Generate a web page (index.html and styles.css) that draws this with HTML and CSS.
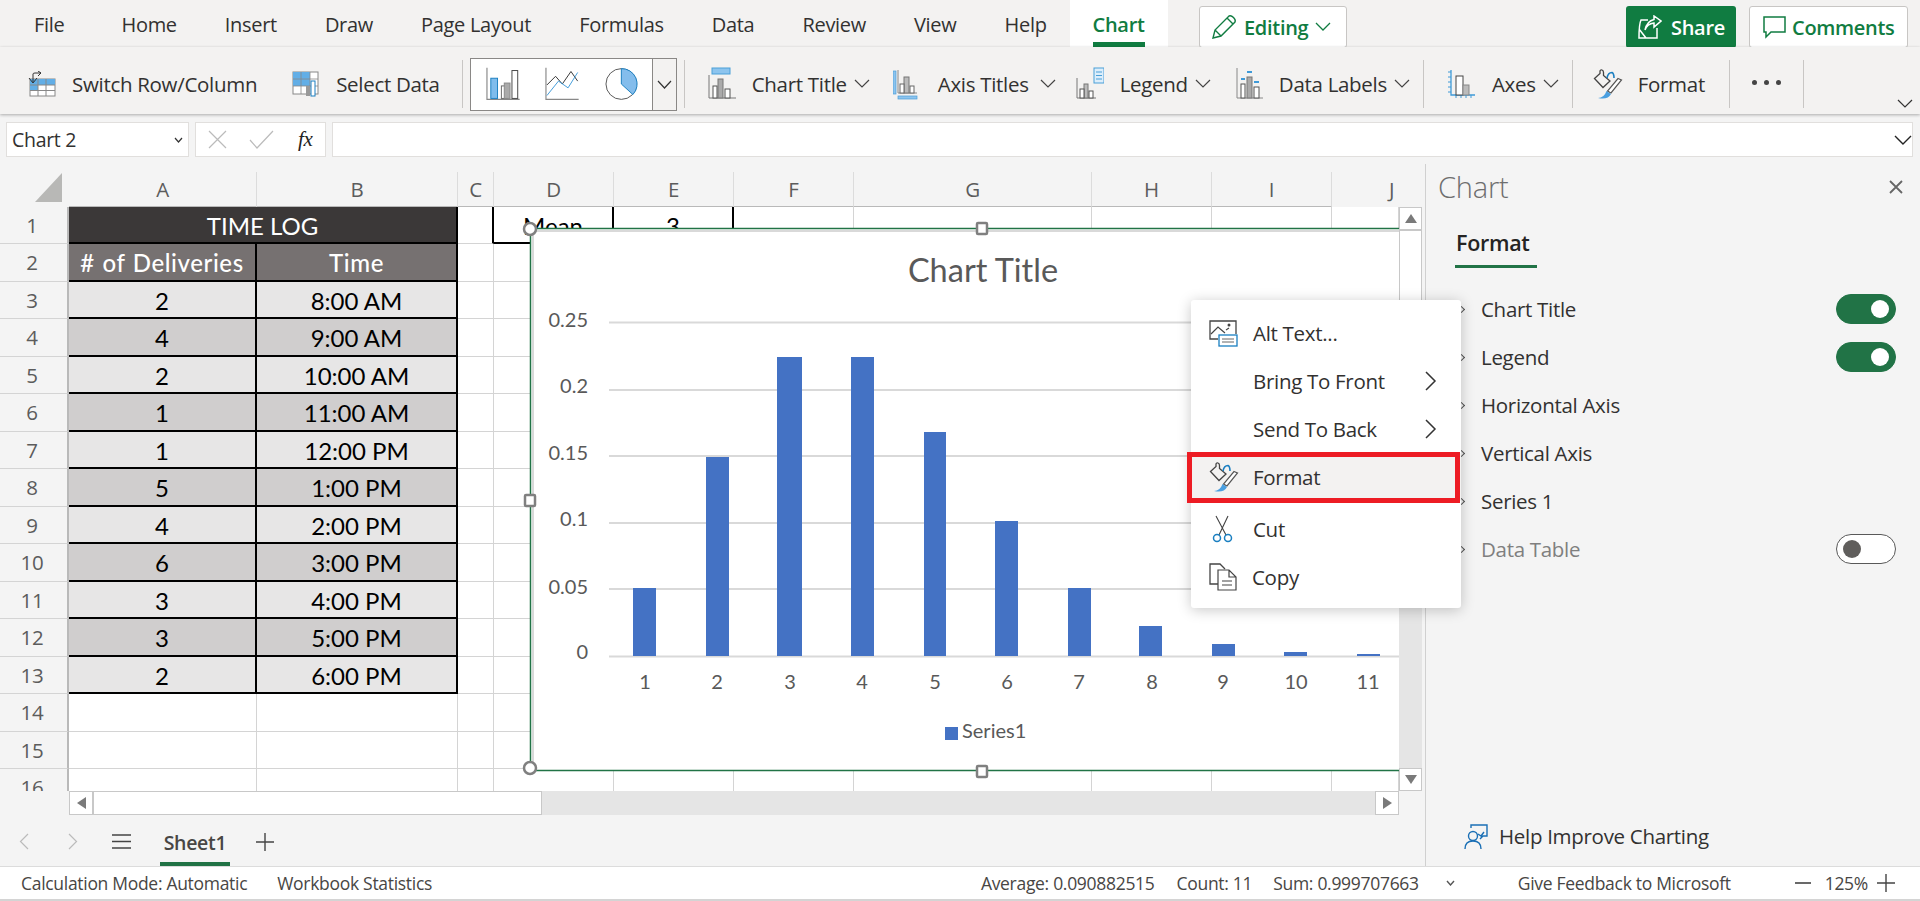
FILE: index.html
```html
<!DOCTYPE html>
<html lang="en">
<head>
    <meta charset="UTF-8">
    <title>Excel - Chart</title>
    <link rel="stylesheet" href="styles.css">
</head>
<body>
    <svg class="defs" width="0" height="0">
        <symbol id="format-icon" viewBox="0 0 30 30">
            <path d="M1.5 9.5 L7 4.5 V2 Q7.5 .5 9 1 Q10.5 1.5 10.5 3.5 V6.5 L17 12 L10 18.5 Z" fill="none" stroke="#444" stroke-width="1.3"/>
            <path d="M14 9 Q15 3.5 19 3.5 Q21 4.5 21 9" fill="none" stroke="#1a7fc1" stroke-width="1.6"/>
            <path d="M25 9.5 L28.5 11 L18 24 L14.5 22 Z" fill="#fff" stroke="#555" stroke-width="1.2"/>
            <path d="M5 29 Q11 29 13.5 22 L18 25 Q15 31 5 29 Z" fill="#4a9fe0"/>
        </symbol>
    </svg>

    <div class="tabs">
        <div class="tab-list">
            <span class="tab tab-file">File</span>
            <span class="tab">Home</span>
            <span class="tab">Insert</span>
            <span class="tab">Draw</span>
            <span class="tab">Page Layout</span>
            <span class="tab">Formulas</span>
            <span class="tab">Data</span>
            <span class="tab">Review</span>
            <span class="tab">View</span>
            <span class="tab">Help</span>
            <span class="tab tab-active"><b>Chart</b></span>
        </div>
        <button class="editing">
            <svg width="26" height="26" viewBox="0 0 26 26"><path d="M2 24 L4 16 L18 2 Q20 1 22.5 3.5 Q25 6 24 8 L10 22 Z M4 16 L10 22 M16 4 L22 10" fill="none" stroke="#107c41" stroke-width="1.4"/></svg>
            <span>Editing</span>
            <svg width="16" height="10" viewBox="0 0 16 10"><path d="M1 1 L8 8 L15 1" fill="none" stroke="#107c41" stroke-width="1.3"/></svg>
        </button>
        <button class="share">
            <svg width="24" height="24" viewBox="0 0 24 24"><path d="M10 5 H3 Q1 9 1 23 H19 V13 M1 14 L8 23" fill="none" stroke="#fff" stroke-width="1.5"/><path d="M7 15 Q9 9 16 8 V12 L23 6 L16 1 V4.5 Q9 6 7 15 Z" fill="none" stroke="#fff" stroke-width="1.5"/></svg>
            <span>Share</span>
        </button>
        <button class="comments">
            <svg width="23" height="23" viewBox="0 0 23 23"><path d="M1 1 H22 V16 H8 L3 21 V16 H1 Z" fill="none" stroke="#107c41" stroke-width="1.5"/></svg>
            <span>Comments</span>
        </button>
    </div>

    <div class="ribbon">
        <div class="rb rb-switch">
            <svg width="28" height="26" viewBox="0 0 28 26"><rect x="2" y="8" width="25" height="17" fill="#fff" stroke="#888"/><rect x="2" y="8" width="25" height="6" fill="#62aee6"/><rect x="2" y="14" width="8" height="5" fill="#62aee6"/><path d="M10 8 V25 M18 8 V25 M2 14 H27 M2 19.5 H27" stroke="#888"/><path d="M1 7 L5 12 L9 7 M5 11 V3 Q5 2 7 2 H13 M10 0 L13 2 L10 5" fill="none" stroke="#333"/></svg>
            <span>Switch Row/Column</span>
        </div>
        <div class="rb rb-select">
            <svg width="28" height="26" viewBox="0 0 28 26"><rect x="1" y="1" width="25" height="22" fill="#fff" stroke="#888"/><rect x="1" y="1" width="17" height="14" fill="#62aee6"/><path d="M9 1 V23 M18 1 V23 M1 8 H26 M1 15 H26" stroke="#888" stroke-width=".8"/><rect x="14" y="15" width="4" height="10" fill="#999"/><rect x="19" y="10" width="4" height="15" fill="#fff" stroke="#1a7fc1"/></svg>
            <span>Select Data</span>
        </div>
        <i class="sep sep-gallery"></i>
        <div class="gallery">
            <svg width="36" height="34" viewBox="0 0 36 34"><path d="M1 0 V33 H35" fill="none" stroke="#888" stroke-width="1.2"/><rect x="5" y="11" width="7" height="21" fill="#7fbcec" stroke="#1a7fc1"/><rect x="16" y="19" width="6" height="13" fill="#fff" stroke="#666"/><rect x="19" y="16" width="6" height="16" fill="#aaa" stroke="#888"/><rect x="27" y="3" width="6" height="29" fill="#fff" stroke="#444"/></svg>
            <svg width="36" height="34" viewBox="0 0 36 34"><path d="M1 0 V33 H35" fill="none" stroke="#888" stroke-width="1.2"/><path d="M2 18 L11 9 L18 17 L27 4 L34 14" fill="none" stroke="#333" stroke-width="1"/><path d="M2 29 L14 14 L24 21 L34 5" fill="none" stroke="#3f9ad8" stroke-width="1"/></svg>
            <svg width="34" height="34" viewBox="0 0 34 34"><circle cx="17" cy="17" r="16" fill="#fff" stroke="#555"/><path d="M17 1 A16 16 0 0 1 29 28 L17 17 Z" fill="#84bdec" stroke="#1a7fc1"/></svg>
            <span class="gallery-more"><svg width="15" height="9" viewBox="0 0 15 9"><path d="M1 1 L7.5 8 L14 1" fill="none" stroke="#333" stroke-width="1.2"/></svg></span>
        </div>
        <i class="sep"></i>
        <div class="rb rb-title">
            <svg width="28" height="34" viewBox="0 0 28 34"><rect x="4" y="1" width="18" height="6" fill="#8cc4ee" stroke="#4a9fd8"/><path d="M1 8 V31 H28" fill="none" stroke="#777"/><rect x="10" y="12" width="5" height="19" fill="#aaa" stroke="#777"/><rect x="17" y="22" width="5" height="9" fill="#fff" stroke="#555"/><rect x="5" y="19" width="4" height="12" fill="#fff" stroke="#555"/></svg>
            <span>Chart Title</span><svg class="chev" width="16" height="10" viewBox="0 0 16 10"><path d="M1 1 L8 8 L15 1" fill="none" stroke="#444" stroke-width="1.2"/></svg>
        </div>
        <div class="rb rb-axis">
            <svg width="25" height="34" viewBox="0 0 25 34"><rect x="0" y="4" width="3" height="23" fill="#8cc4ee" stroke="#4a9fd8" stroke-width=".7"/><path d="M5 3 V26 H24" fill="none" stroke="#888"/><rect x="11" y="10" width="5" height="16" fill="#bbb" stroke="#777"/><rect x="17" y="19" width="4" height="7" fill="#fff" stroke="#666"/><rect x="7" y="17" width="4" height="9" fill="#fff" stroke="#666"/><rect x="5" y="29" width="19" height="3" fill="#8cc4ee" stroke="#4a9fd8" stroke-width=".7"/></svg>
            <span>Axis Titles</span><svg class="chev" width="16" height="10" viewBox="0 0 16 10"><path d="M1 1 L8 8 L15 1" fill="none" stroke="#444" stroke-width="1.2"/></svg>
        </div>
        <div class="rb rb-legend">
            <svg width="28" height="34" viewBox="0 0 28 34"><path d="M1 11 V31 H20" fill="none" stroke="#777"/><rect x="8" y="17" width="4" height="14" fill="#bbb" stroke="#777"/><rect x="13" y="24" width="4" height="7" fill="#fff" stroke="#555"/><rect x="4" y="22" width="4" height="9" fill="#fff" stroke="#555"/><rect x="18" y="1" width="10" height="15" fill="#dceefb" stroke="#4a9fd8"/><path d="M20 5 H26 M20 8.5 H26 M20 12 H26" stroke="#4a9fd8"/></svg>
            <span>Legend</span><svg class="chev" width="16" height="10" viewBox="0 0 16 10"><path d="M1 1 L8 8 L15 1" fill="none" stroke="#444" stroke-width="1.2"/></svg>
        </div>
        <div class="rb rb-labels">
            <svg width="27" height="34" viewBox="0 0 27 34"><path d="M1 1 V31 H27" fill="none" stroke="#888"/><rect x="11" y="10" width="5" height="21" fill="#aaa" stroke="#777"/><rect x="18" y="20" width="5" height="11" fill="#fff" stroke="#555"/><rect x="5" y="17" width="4" height="14" fill="#fff" stroke="#555"/><path d="M11 5 H16 M5 12 H9 M18 15 H23" stroke="#3f9ad8" stroke-width="2"/></svg>
            <span>Data Labels</span><svg class="chev" width="16" height="10" viewBox="0 0 16 10"><path d="M1 1 L8 8 L15 1" fill="none" stroke="#444" stroke-width="1.2"/></svg>
        </div>
        <i class="sep"></i>
        <div class="rb rb-axes">
            <svg width="28" height="30" viewBox="0 0 28 30"><path d="M3 1 V26 H27" fill="none" stroke="#3f9ad8" stroke-width="1.3"/><path d="M0 3 H3 M0 8 H3 M0 13 H3 M0 18 H3 M0 23 H3 M8 26 V29 M13 26 V29 M18 26 V29 M23 26 V29" stroke="#3f9ad8"/><rect x="8" y="7" width="7" height="19" fill="#fff" stroke="#444"/><rect x="15" y="16" width="6" height="10" fill="#bbb" stroke="#888"/></svg>
            <span>Axes</span><svg class="chev" width="16" height="10" viewBox="0 0 16 10"><path d="M1 1 L8 8 L15 1" fill="none" stroke="#444" stroke-width="1.2"/></svg>
        </div>
        <i class="sep"></i>
        <div class="rb rb-format">
            <svg width="30" height="30"><use href="#format-icon"/></svg>
            <span>Format</span>
        </div>
        <i class="sep sep-format"></i>
        <div class="more"><i></i><i></i><i></i></div>
        <i class="sep"></i>
        <svg class="collapse" width="16" height="10" viewBox="0 0 16 10"><path d="M1 1 L8 8 L15 1" fill="none" stroke="#333" stroke-width="1.2"/></svg>
    </div>

    <div class="formula-bar">
        <div class="name-box"><span>Chart 2</span><svg width="9" height="6" viewBox="0 0 9 6"><path d="M1 1 L4.5 5 L8 1" fill="none" stroke="#333" stroke-width="1.2"/></svg></div>
        <div class="fn-box">
            <svg width="19" height="19" viewBox="0 0 19 19"><path d="M1 1 L18 18 M18 1 L1 18" stroke="#bbb" stroke-width="1.2"/></svg>
            <svg width="25" height="19" viewBox="0 0 25 19"><path d="M1 10 L8 18 L24 1" fill="none" stroke="#bbb" stroke-width="1.2"/></svg>
            <span class="fx">fx</span>
        </div>
        <div class="fn-input"><svg width="18" height="10" viewBox="0 0 18 10"><path d="M1 1 L9 9 L17 1" fill="none" stroke="#222" stroke-width="1.4"/></svg></div>
    </div>

    <div class="main">
        <div class="sheet">
            <div class="col-heads">
                <div class="corner"><svg width="27" height="29" viewBox="0 0 27 29"><path d="M27 0 V29 H0 Z" fill="#b8b8b6"/></svg></div>
                <span>A</span><span>B</span><span>C</span><span>D</span><span>E</span><span>F</span><span>G</span><span>H</span><span>I</span><span>J</span>
            </div>
            <div class="sheet-body">
                <div class="cells">
                    <div class="rh">1</div><div class="c title">TIME LOG</div><div class="c edge"></div><div class="c mean">Mean</div><div class="c mean">3</div><i></i><i></i><i></i><i></i><i></i>
                    <div class="rh">2</div><div class="c head"># of Deliveries</div><div class="c head">Time</div><i></i><i></i><i></i><i></i><i></i><i></i><i></i><i></i>
                    <div class="rh">3</div><div class="c lt">2</div><div class="c lt">8:00 AM</div><i></i><i></i><i></i><i></i><i></i><i></i><i></i><i></i>
                    <div class="rh">4</div><div class="c dk">4</div><div class="c dk">9:00 AM</div><i></i><i></i><i></i><i></i><i></i><i></i><i></i><i></i>
                    <div class="rh">5</div><div class="c lt">2</div><div class="c lt">10:00 AM</div><i></i><i></i><i></i><i></i><i></i><i></i><i></i><i></i>
                    <div class="rh">6</div><div class="c dk">1</div><div class="c dk">11:00 AM</div><i></i><i></i><i></i><i></i><i></i><i></i><i></i><i></i>
                    <div class="rh">7</div><div class="c lt">1</div><div class="c lt">12:00 PM</div><i></i><i></i><i></i><i></i><i></i><i></i><i></i><i></i>
                    <div class="rh">8</div><div class="c dk">5</div><div class="c dk">1:00 PM</div><i></i><i></i><i></i><i></i><i></i><i></i><i></i><i></i>
                    <div class="rh">9</div><div class="c lt">4</div><div class="c lt">2:00 PM</div><i></i><i></i><i></i><i></i><i></i><i></i><i></i><i></i>
                    <div class="rh">10</div><div class="c dk">6</div><div class="c dk">3:00 PM</div><i></i><i></i><i></i><i></i><i></i><i></i><i></i><i></i>
                    <div class="rh">11</div><div class="c lt">3</div><div class="c lt">4:00 PM</div><i></i><i></i><i></i><i></i><i></i><i></i><i></i><i></i>
                    <div class="rh">12</div><div class="c dk">3</div><div class="c dk">5:00 PM</div><i></i><i></i><i></i><i></i><i></i><i></i><i></i><i></i>
                    <div class="rh">13</div><div class="c lt">2</div><div class="c lt">6:00 PM</div><i></i><i></i><i></i><i></i><i></i><i></i><i></i><i></i>
                    <div class="rh">14</div><i></i><i></i><i></i><i></i><i></i><i></i><i></i><i></i><i></i><i></i>
                    <div class="rh">15</div><i></i><i></i><i></i><i></i><i></i><i></i><i></i><i></i><i></i><i></i>
                    <div class="rh">16</div><i></i><i></i><i></i><i></i><i></i><i></i><i></i><i></i><i></i><i></i>
                </div>
                <div class="vscroll">
                    <span class="sb-btn"><b class="tri tri-up"></b></span>
                    <span class="vthumb"></span>
                    <span class="sb-track"></span>
                    <span class="sb-btn"><b class="tri tri-down"></b></span>
                </div>
            </div>
            <div class="hscroll">
                <span class="sb-btn"><b class="tri tri-left"></b></span>
                <span class="hthumb"></span>
                <span class="sb-track"></span>
                <span class="sb-btn"><b class="tri tri-right"></b></span>
            </div>
            <div class="sheet-tabs">
                <svg class="nav" width="10" height="17" viewBox="0 0 10 17"><path d="M9 1 L1.5 8.5 L9 16" fill="none" stroke="#bbb" stroke-width="1.2"/></svg>
                <svg class="nav nav-next" width="10" height="17" viewBox="0 0 10 17"><path d="M1 1 L8.5 8.5 L1 16" fill="none" stroke="#bbb" stroke-width="1.2"/></svg>
                <svg class="burger" width="19" height="15" viewBox="0 0 19 15"><path d="M0 1 H19 M0 7.5 H19 M0 14 H19" stroke="#444" stroke-width="1.4"/></svg>
                <span class="sheet-tab">Sheet1</span>
                <svg class="plus" width="18" height="18" viewBox="0 0 18 18"><path d="M9 0 V18 M0 9 H18" stroke="#444" stroke-width="1.4"/></svg>
            </div>

            <svg class="chart" width="869" height="543" viewBox="530 228 869 543">
                <rect x="531" y="229" width="868" height="542" fill="#fff"/>
                <path d="M533 231 H1399 M533 231 V770" stroke="#d9d9d9" stroke-width="2" fill="none"/>
                <path d="M530 228.500 H1399 M530.500 228 V771 M530 770.500 H1399" stroke="#217346" stroke-width="1.500" fill="none"/>
                <text class="ch-title" x="983" y="282" text-anchor="middle">Chart Title</text>
                <g class="ch-grid">
                    <path d="M609 322.500 H1399 M609 390 H1399 M609 456 H1399 M609 523 H1399 M609 589 H1399 M609 656.500 H1399"/>
                </g>
                <g class="ch-bars">
                    <rect x="633" y="588" width="23" height="68"/>
                    <rect x="706" y="457" width="23" height="199"/>
                    <rect x="777" y="357" width="25" height="299"/>
                    <rect x="851" y="357" width="23" height="299"/>
                    <rect x="924" y="432" width="22" height="224"/>
                    <rect x="995" y="521" width="23" height="135"/>
                    <rect x="1068" y="588" width="23" height="68"/>
                    <rect x="1139" y="626" width="23" height="30"/>
                    <rect x="1212" y="644" width="23" height="12"/>
                    <rect x="1284" y="652" width="23" height="4"/>
                    <rect x="1357" y="654" width="23" height="2"/>
                </g>
                <g class="ch-lbl" text-anchor="end">
                    <text x="588" y="327">0.25</text>
                    <text x="588" y="393">0.2</text>
                    <text x="588" y="460">0.15</text>
                    <text x="588" y="526">0.1</text>
                    <text x="588" y="594">0.05</text>
                    <text x="588" y="659">0</text>
                </g>
                <g class="ch-lbl" text-anchor="middle">
                    <text x="645" y="689">1</text>
                    <text x="717" y="689">2</text>
                    <text x="790" y="689">3</text>
                    <text x="862" y="689">4</text>
                    <text x="935" y="689">5</text>
                    <text x="1007" y="689">6</text>
                    <text x="1079" y="689">7</text>
                    <text x="1152" y="689">8</text>
                    <text x="1223" y="689">9</text>
                    <text x="1296" y="689">10</text>
                    <text x="1368" y="689">11</text>
                </g>
                <rect x="945" y="727" width="13" height="13" fill="#4472c4"/>
                <text class="ch-lbl" x="962" y="738">Series1</text>
                <g class="handles">
                    <circle cx="530" cy="229" r="6"/>
                    <rect x="977" y="223" width="10" height="11" rx="1"/>
                    <rect x="525" y="495" width="10" height="11" rx="1"/>
                    <circle cx="530" cy="768" r="6"/>
                    <rect x="977" y="766" width="10" height="11" rx="1"/>
                </g>
            </svg>
        </div>

        <aside class="panel">
            <div class="panel-head">
                <span class="panel-title">Chart</span>
                <svg width="14" height="14" viewBox="0 0 14 14"><path d="M1 1 L13 13 M13 1 L1 13" stroke="#666" stroke-width="1.8"/></svg>
            </div>
            <div class="panel-tab">Format</div>
            <ul class="panel-list">
                <li><b class="arrow"></b><span>Chart Title</span><span class="toggle on"><i></i></span></li>
                <li><b class="arrow"></b><span>Legend</span><span class="toggle on"><i></i></span></li>
                <li><b class="arrow"></b><span>Horizontal Axis</span></li>
                <li><b class="arrow"></b><span>Vertical Axis</span></li>
                <li><b class="arrow"></b><span>Series 1</span></li>
                <li class="muted"><b class="arrow"></b><span>Data Table</span><span class="toggle"><i></i></span></li>
            </ul>
            <div class="help">
                <svg width="24" height="25" viewBox="0 0 24 25"><circle cx="9" cy="12" r="4.500" fill="none" stroke="#1a6fb5" stroke-width="1.400"/><path d="M1 25 Q1 17 9 17 Q17 17 17 25 M7 4 V1 H23 V12 H19 L16 15 M14 10 L17 12 L20 8" fill="none" stroke="#1a6fb5" stroke-width="1.400"/></svg>
                <span>Help Improve Charting</span>
            </div>
        </aside>
    </div>

    <div class="status">
        <span class="st-calc">Calculation Mode: Automatic</span>
        <span class="st-book">Workbook Statistics</span>
        <span class="st-avg">Average: 0.090882515</span>
        <span class="st-count">Count: 11</span>
        <span class="st-sum">Sum: 0.999707663</span>
        <svg class="st-more" width="9" height="6" viewBox="0 0 9 6"><path d="M1 1 L4.500 5 L8 1" fill="none" stroke="#555" stroke-width="1.400"/></svg>
        <span class="st-feedback">Give Feedback to Microsoft</span>
        <svg class="st-minus" width="16" height="2" viewBox="0 0 16 2"><path d="M0 1 H16" stroke="#444" stroke-width="1.600"/></svg>
        <span class="st-zoom">125%</span>
        <svg class="st-plus" width="18" height="18" viewBox="0 0 18 18"><path d="M9 0 V18 M0 9 H18" stroke="#444" stroke-width="1.400"/></svg>
    </div>

    <div class="menu">
        <div class="menu-item">
            <svg width="29" height="27" viewBox="0 0 29 27"><path d="M9 19 H1 V1 H27 V14" fill="none" stroke="#444" stroke-width="1.300"/><path d="M2 14 L9 7 L16 13 M17 10 L20 8" fill="none" stroke="#444" stroke-width="1.200"/><circle cx="20" cy="5" r="1.500" fill="#444"/><rect x="10" y="15" width="18" height="11" fill="#fff" stroke="#1a7fc1" stroke-width="1.300"/><path d="M13 19 H25 M13 22 H25" stroke="#666"/></svg>
            <span>Alt Text...</span>
        </div>
        <div class="menu-item"><span class="no-icon">Bring To Front</span><svg class="sub" width="12" height="20" viewBox="0 0 12 20"><path d="M1 1 L10 10 L1 19" fill="none" stroke="#333" stroke-width="1.500"/></svg></div>
        <div class="menu-item"><span class="no-icon">Send To Back</span><svg class="sub" width="12" height="20" viewBox="0 0 12 20"><path d="M1 1 L10 10 L1 19" fill="none" stroke="#333" stroke-width="1.500"/></svg></div>
        <div class="menu-item selected">
            <svg width="30" height="30"><use href="#format-icon"/></svg>
            <span>Format</span>
        </div>
        <div class="menu-item menu-cut">
            <svg width="29" height="28" viewBox="0 0 29 28"><path d="M7 1 L17 20 M19 1 L10 20" fill="none" stroke="#444" stroke-width="1.100"/><circle cx="8" cy="23" r="3.500" fill="none" stroke="#1a7fc1" stroke-width="1.500"/><circle cx="19" cy="23" r="3.500" fill="none" stroke="#1a7fc1" stroke-width="1.500"/></svg>
            <span>Cut</span>
        </div>
        <div class="menu-item menu-copy">
            <svg width="28" height="28" viewBox="0 0 28 28"><path d="M9 21 H1 V1 H11 L16 6" fill="none" stroke="#444" stroke-width="1.300"/><path d="M9 7 H20 L27 14 V27 H9 Z M20 7 V14 H27 M13 18 H23 M13 22 H23" fill="#fff" stroke="#444" stroke-width="1.200"/></svg>
            <span>Copy</span>
        </div>
    </div>
</body>
</html>
```
FILE: styles.css
```css
* {
    box-sizing: border-box;
}
html, body {
    margin: 0;
    height: 100%;
}
body {
    position: relative;
    width: 1920px;
    height: 901px;
    overflow: hidden;
    display: flex;
    flex-direction: column;
    font-family: "Open Sans", sans-serif;
    font-size: 20.5px;
    letter-spacing: -0.3px;
    color: #323130;
    background-color: #f4f4f4;
}
.defs {
    position: absolute;
}
button {
    font-family: inherit;
    letter-spacing: inherit;
    display: flex;
    align-items: center;
    height: 42px;
    padding: 0;
    border-radius: 3px;
    font-size: 20px;
    font-weight: 600;
}

/* top tabs */
.tabs {
    height: 47px;
    display: flex;
    align-items: flex-start;
    background-color: #f3f2f1;
    padding-left: 34px;
}
.tab-list {
    flex: none;
    display: flex;
    width: 1135px;
    font-size: 20px;
    white-space: nowrap;
}
.tab {
    flex: none;
    line-height: 50px;
    margin-right: 48px;
}
.tab-file {
    margin-right: 57px;
}
.tab-active {
    height: 47px;
    margin-left: -25px;
    margin-right: 0;
    padding: 0 23px;
    background-color: #fff;
    color: #107c41;
}
.tab-active b {
    display: block;
    height: 47px;
    font-weight: 600;
    border-bottom: 5px solid #107c41;
}
.editing {
    width: 148px;
    margin: 6px 0 0 30px;
    gap: 7px;
    padding-left: 11px;
    background-color: #fff;
    border: 1px solid #c8c6c4;
    color: #107c41;
}
.share {
    width: 110px;
    margin: 6px 0 0 279px;
    gap: 9px;
    padding-left: 12px;
    background-color: #107c41;
    border: none;
    color: #fff;
}
.comments {
    width: 159px;
    margin: 6px 0 0 13px;
    gap: 6px;
    padding-left: 13px;
    background-color: #fff;
    border: 1px solid #c8c6c4;
    color: #107c41;
}

/* ribbon */
.ribbon {
    position: relative;
    z-index: 2;
    height: 67px;
    display: flex;
    align-items: center;
    padding-top: 7px;
    background-color: #f3f2f1;
    box-shadow: 0 1px 3px rgba(0, 0, 0, 0.3);
}
.rb {
    display: flex;
    align-items: center;
}
.rb-switch {
    margin-left: 28px;
    gap: 16px;
}
.rb-select {
    margin-left: 35px;
    gap: 16px;
}
.rb-title {
    margin-left: 23px;
    gap: 16px;
}
.rb-axis {
    margin-left: 23px;
    gap: 20px;
}
.rb-legend {
    margin-left: 20px;
    gap: 16px;
}
.rb-labels {
    margin-left: 25px;
    gap: 16px;
}
.rb-axes {
    margin-left: 24px;
    gap: 16px;
}
.rb-format {
    margin-left: 20px;
    gap: 15px;
}
.chev {
    margin-left: -9px;
}
.sep {
    width: 1px;
    height: 48px;
    margin-left: 13px;
    background-color: #c8c6c4;
}
.sep-gallery {
    margin-left: 22px;
}
.sep-format {
    margin-left: 24px;
}
.gallery {
    width: 207px;
    height: 53px;
    margin-left: 7px;
    margin-right: -6px;
    display: flex;
    align-items: center;
    padding-left: 15px;
    gap: 25px;
    background-color: #fff;
    border: 1px solid #8a8886;
}
.gallery-more {
    height: 100%;
    width: 25px;
    margin-left: -11px;
    display: flex;
    align-items: center;
    justify-content: center;
    background-color: #f3f2f1;
    border-left: 1px solid #8a8886;
}
.more {
    display: flex;
    gap: 7px;
    margin: -4px 9px 0 22px;
}
.more i {
    width: 5px;
    height: 5px;
    border-radius: 50%;
    background-color: #444;
}
.collapse {
    position: absolute;
    right: 7px;
    top: 52px;
}

/* formula bar */
.formula-bar {
    height: 50px;
    padding: 8px 7px 7px 6px;
    display: flex;
    gap: 6px;
    background-color: #f4f4f4;
}
.name-box, .fn-box, .fn-input {
    display: flex;
    align-items: center;
    background-color: #fff;
    border: 1px solid #e1dfdd;
}
.name-box {
    width: 183px;
    justify-content: space-between;
    padding: 0 5px;
    font-size: 19.5px;
}
.fn-box {
    width: 131px;
    padding-left: 12px;
    gap: 22px;
}
.fx {
    font-family: "Liberation Serif", serif;
    font-style: italic;
    font-size: 21px;
    margin-left: 2px;
    color: #222;
}
.fn-input {
    flex: 1;
    justify-content: flex-end;
}

/* main area */
.main {
    height: 702px;
    display: flex;
}
.sheet {
    position: relative;
    width: 1425px;
    padding-top: 8px;
    display: flex;
    flex-direction: column;
}
.col-heads, .cells {
    display: grid;
    grid-template-columns: 69px 188px 201px 36px 120px 120px 120px 238px 120px 120px 67px;
}
.col-heads {
    height: 34.5px;
    grid-template-columns: 69px 188px 201px 36px 120px 120px 120px 238px 120px 120px 93px;
    color: #5c5c5c;
    font-size: 20.5px;
}
.col-heads span {
    display: flex;
    align-items: center;
    justify-content: center;
    border-right: 1px solid #dcdcdc;
    border-bottom: 2px solid #b9b9b9;
}
.col-heads span:last-child {
    padding-left: 26px;
    border-right: none;
    border-bottom-color: transparent;
}
.corner {
    padding: 1px 0 0 35px;
}
.sheet-body {
    height: 584px;
    display: flex;
}
.cells {
    width: 1399px;
    height: 584px;
    overflow: hidden;
    grid-auto-rows: 37.5px;
    font-family: Lato, sans-serif;
    font-size: 24px;
    letter-spacing: 0;
    color: #000;
    background-color: #fff;
}
.cells i {
    border-right: 1px solid #d4d4d4;
    border-bottom: 1px solid #d4d4d4;
}
.rh {
    display: flex;
    align-items: center;
    justify-content: center;
    padding-right: 3px;
    font-family: "Open Sans", sans-serif;
    font-size: 20.5px;
    letter-spacing: -0.3px;
    color: #5c5c5c;
    background-color: #f4f4f4;
    border-right: 2px solid #b9b9b9;
    border-bottom: 1px solid #d4d4d4;
}
.c {
    display: flex;
    align-items: center;
    justify-content: center;
    padding-top: 2px;
    border-right: 2px solid #000;
    border-bottom: 2px solid #000;
}
.title {
    grid-column: span 2;
    background-color: #3b3838;
    color: #fff;
}
.edge {
    border-bottom: 1px solid #d4d4d4;
}
.head {
    background-color: #767171;
    color: #fff;
    font-weight: 500;
    letter-spacing: 0.6px;
    word-spacing: 1px;
}
.lt {
    background-color: #e7e6e6;
}
.dk {
    background-color: #d0cece;
}

/* scrollbars */
.vscroll {
    width: 24px;
    display: flex;
    flex-direction: column;
    background-color: #f4f4f4;
}
.sb-btn {
    flex: none;
    width: 23px;
    height: 23px;
    display: flex;
    align-items: center;
    justify-content: center;
    background-color: #fff;
    border: 1px solid #c8c8c8;
}
.vthumb {
    flex: none;
    width: 23px;
    height: 270px;
    background-color: #fff;
    border: 1px solid #c8c8c8;
}
.sb-track {
    flex: 1;
    background-color: #e5e5e5;
}
.vscroll .sb-track {
    width: 23px;
}
.hscroll {
    height: 24.5px;
    margin-left: 69px;
    width: 1330px;
    display: flex;
}
.hscroll .sb-btn {
    width: 24px;
    height: 24.5px;
}
.hthumb {
    flex: none;
    width: 449px;
    background-color: #fff;
    border: 1px solid #c8c8c8;
}
.tri {
    width: 0;
    height: 0;
    border-style: solid;
    border-color: transparent;
}
.tri-up {
    border-width: 0 6px 9px;
    border-bottom-color: #7a7a7a;
}
.tri-down {
    border-width: 9px 6px 0;
    border-top-color: #7a7a7a;
}
.tri-left {
    border-width: 6px 9px 6px 0;
    border-right-color: #7a7a7a;
}
.tri-right {
    border-width: 6px 0 6px 9px;
    border-left-color: #7a7a7a;
}

/* sheet tabs */
.sheet-tabs {
    height: 51px;
    display: flex;
    align-items: center;
    padding: 2px 0 0 19px;
}
.nav-next {
    margin-left: 39px;
}
.burger {
    margin-left: 34px;
}
.sheet-tab {
    align-self: flex-end;
    width: 70px;
    height: 51px;
    margin-left: 29px;
    line-height: 56px;
    text-align: center;
    font-size: 19.5px;
    font-weight: 600;
    border-bottom: 4px solid #217346;
    color: #484644;
}
.plus {
    margin-left: 26px;
}

/* chart */
.chart {
    position: absolute;
    left: 530px;
    top: 64px;
    overflow: visible;
}
.ch-title {
    font-family: Lato, sans-serif;
    font-size: 32.5px;
    letter-spacing: 0;
    fill: #595959;
}
.ch-grid path {
    stroke: #d9d9d9;
    stroke-width: 2;
    fill: none;
}
.ch-bars rect {
    fill: #4472c4;
}
.ch-lbl {
    font-family: Lato, sans-serif;
    font-size: 20px;
    letter-spacing: 0;
    fill: #595959;
}
.handles circle, .handles rect {
    fill: #fff;
    stroke: #808080;
    stroke-width: 2.5;
}

/* side panel */
.panel {
    flex: 1;
    display: flex;
    flex-direction: column;
    background-color: #f4f4f4;
    border-left: 1px solid #d0d0d0;
}
.panel-head {
    height: 45px;
    display: flex;
    align-items: center;
    justify-content: space-between;
    padding: 0 17px 0 12px;
}
.panel-title {
    font-size: 29px;
    font-weight: 300;
    letter-spacing: -0.2px;
    color: #6e6e6e;
}
.panel-tab {
    width: 82px;
    height: 59px;
    margin-left: 29px;
    padding: 17px 0 0 1px;
    line-height: 34px;
    font-size: 21.5px;
    font-weight: 600;
    color: #252423;
    border-bottom: 3px solid #217346;
}
.panel-list {
    list-style: none;
    margin: 17px 0 0;
    padding: 0;
}
.panel-list li {
    height: 48px;
    display: flex;
    align-items: center;
    padding-left: 33px;
}
.arrow {
    width: 5px;
    height: 5px;
    margin-right: 17px;
    border-top: 1px solid #555;
    border-right: 1px solid #555;
    transform: rotate(45deg);
}
.toggle {
    width: 60px;
    height: 30px;
    margin-left: auto;
    margin-right: 24px;
    display: flex;
    align-items: center;
    padding: 0 6px;
    border-radius: 15px;
    background-color: #fff;
    border: 1px solid #595959;
}
.toggle i {
    width: 18px;
    height: 18px;
    border-radius: 50%;
    background-color: #605e5c;
}
.toggle.on {
    justify-content: flex-end;
    background-color: #217346;
    border-color: #217346;
}
.toggle.on i {
    background-color: #fff;
}
.muted {
    color: #7f7f7f;
}
.help {
    margin-top: auto;
    height: 60px;
    display: flex;
    align-items: center;
    gap: 11px;
    padding: 0 0 0 38px;
}

/* status bar */
.status {
    height: 35px;
    display: flex;
    align-items: center;
    font-size: 17.5px;
    color: #484644;
    background-color: #fff;
    border-top: 1px solid #dcdcdc;
    border-bottom: 2px solid #d4d4d4;
}
.st-calc {
    margin-left: 21px;
}
.st-book {
    margin-left: 30px;
}
.st-avg {
    margin-left: auto;
}
.st-count {
    margin-left: 22px;
}
.st-sum {
    margin-left: 21px;
}
.st-more {
    margin-left: 27px;
}
.st-feedback {
    margin-left: 63px;
}
.st-minus {
    margin-left: 64px;
}
.st-zoom {
    margin-left: 14px;
}
.st-plus {
    margin-left: 9px;
    margin-right: 25px;
}

/* context menu */
.menu {
    position: absolute;
    left: 1191px;
    top: 300px;
    width: 270px;
    height: 308px;
    padding-top: 9px;
    background-color: #fff;
    border-radius: 3px;
    box-shadow: 0 2px 14px rgba(0, 0, 0, 0.22);
}
.menu-item {
    position: relative;
    height: 48px;
    display: flex;
    align-items: center;
    gap: 15px;
    padding-left: 18px;
}
.no-icon {
    margin-left: 44px;
}
.sub {
    position: absolute;
    left: 234px;
}
.selected {
    gap: 14px;
    background-color: #f3f2f1;
}
.selected::after {
    content: "";
    position: absolute;
    left: -4px;
    right: 1px;
    top: -1px;
    bottom: -2px;
    border: 5px solid #ed1c24;
}
.menu-cut {
    margin-top: 4px;
}
.menu-copy {
    gap: 15px;
}
```
